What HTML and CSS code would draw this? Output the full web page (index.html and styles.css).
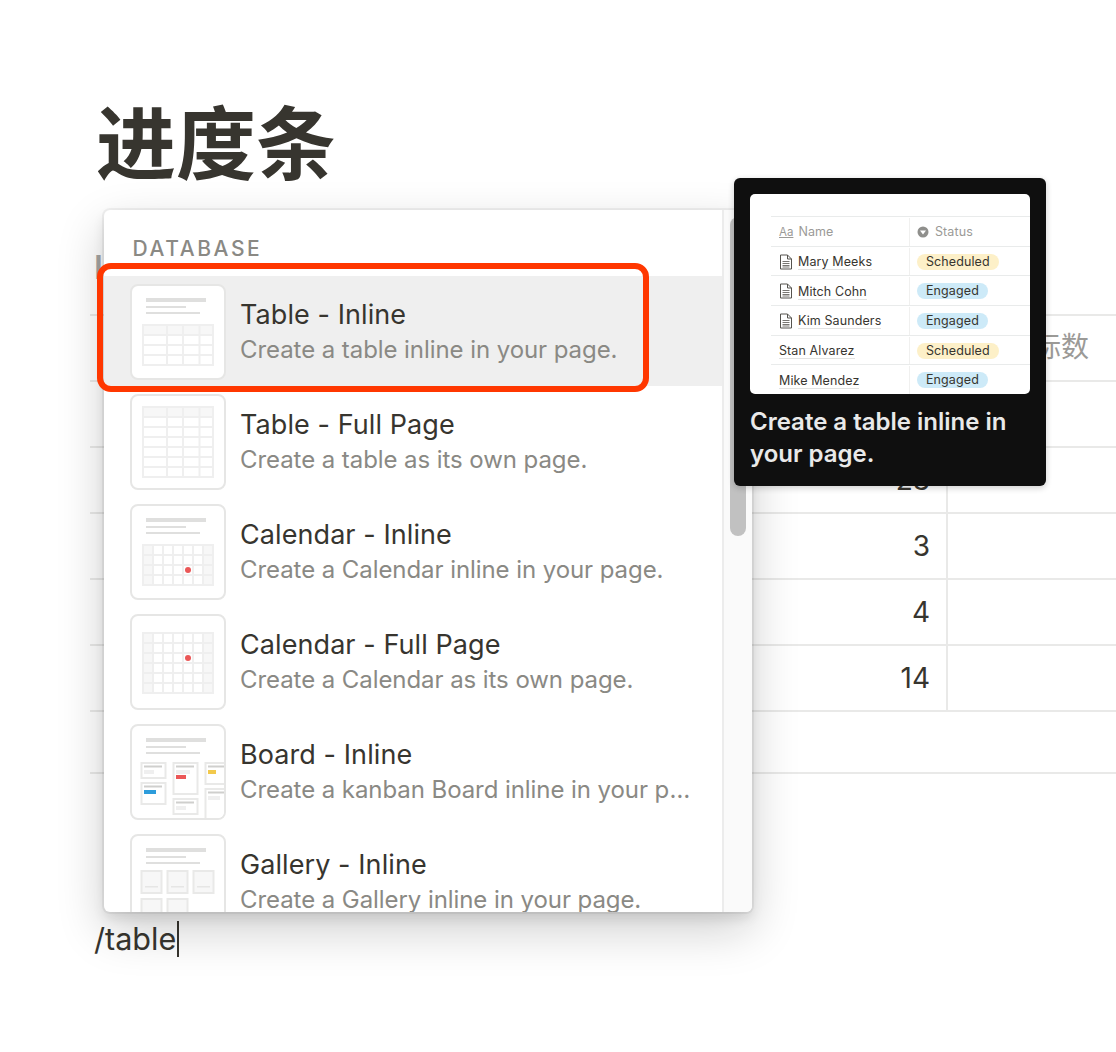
FILE: index.html
```html
<!DOCTYPE html>
<html lang="zh">
<head>
<meta charset="utf-8">
<title>进度条</title>
<link rel="stylesheet" href="styles.css">
</head>
<body>
<main class="page">
  <h1 class="title">进度条</h1>
  <div class="stub">I</div>
  <div class="sheet">
    <div class="sheet-row"><div class="num"></div><div class="head">指标数</div></div>
    <div class="sheet-row"><div class="num"></div><div></div></div>
    <div class="sheet-row"><div class="num">23</div><div></div></div>
    <div class="sheet-row"><div class="num">3</div><div></div></div>
    <div class="sheet-row"><div class="num">4</div><div></div></div>
    <div class="sheet-row"><div class="num">14</div><div></div></div>
    <div class="sheet-row sheet-blank"></div>
  </div>
  <div class="input">/table<span class="caret"></span></div>
</main>

<svg class="defs" width="0" height="0" aria-hidden="true">
  <defs>
    <g id="lines">
      <rect x="14" y="12" width="60" height="4" fill="#dfdfde"/>
      <rect x="14" y="20" width="40" height="2" fill="#dfdfde"/>
      <rect x="14" y="26" width="54" height="2" fill="#dfdfde"/>
    </g>
    <g id="doc" fill="none" stroke="#55534e" stroke-width="1">
      <path d="M1.500 1h7l4 4v10h-11z"/><path d="M8.500 1v4h4"/><path d="M3.500 7.500h7M3.500 9.500h7M3.500 11.500h7M3.500 13h7" stroke-width=".8"/>
    </g>
  </defs>
</svg>

<section class="menu">
  <div class="menu-list">
    <div class="menu-label">DATABASE</div>

    <div class="item item-active">
      <div class="thumb"><svg viewBox="0 0 92 92" class="thumb-svg">
        <use href="#lines"/>
        <g class="grid"><rect x="11" y="39" width="70" height="40"/><rect x="11" y="39" width="70" height="10" class="shade"/>
        <path d="M11 49h70M11 59h70M11 69h70M35 39v40M51 39v40M67.500 39v40"/></g>
      </svg></div>
      <div class="item-text"><div class="item-title">Table - Inline</div><div class="item-desc">Create a table inline in your page.</div></div>
    </div>

    <div class="item">
      <div class="thumb"><svg viewBox="0 0 92 92" class="thumb-svg">
        <g class="grid"><rect x="11" y="11" width="70" height="70"/><rect x="11" y="11" width="70" height="10" class="shade"/>
        <path d="M11 21h70M11 31h70M11 41h70M11 51h70M11 61h70M11 71h70M35 11v70M51 11v70M67.500 11v70"/></g>
      </svg></div>
      <div class="item-text"><div class="item-title">Table - Full Page</div><div class="item-desc">Create a table as its own page.</div></div>
    </div>

    <div class="item">
      <div class="thumb"><svg viewBox="0 0 92 92" class="thumb-svg">
        <use href="#lines"/>
        <g class="grid"><rect x="11" y="39" width="70" height="40"/><rect x="11" y="39" width="10" height="40" class="shade"/><rect x="71" y="39" width="10" height="40" class="shade"/>
        <path d="M11 49h70M11 59h70M11 69h70M21 39v40M31 39v40M41 39v40M51 39v40M61 39v40M71 39v40"/></g>
        <circle cx="56" cy="64" r="3" fill="#eb5757"/>
      </svg></div>
      <div class="item-text"><div class="item-title">Calendar - Inline</div><div class="item-desc">Create a Calendar inline in your page.</div></div>
    </div>

    <div class="item">
      <div class="thumb"><svg viewBox="0 0 92 92" class="thumb-svg">
        <g class="grid"><rect x="11" y="17" width="70" height="60"/><rect x="11" y="17" width="10" height="60" class="shade"/><rect x="71" y="17" width="10" height="60" class="shade"/>
        <path d="M11 27h70M11 37h70M11 47h70M11 57h70M11 67h70M21 17v60M31 17v60M41 17v60M51 17v60M61 17v60M71 17v60"/></g>
        <circle cx="56" cy="42" r="3" fill="#eb5757"/>
      </svg></div>
      <div class="item-text"><div class="item-title">Calendar - Full Page</div><div class="item-desc">Create a Calendar as its own page.</div></div>
    </div>

    <div class="item">
      <div class="thumb"><svg viewBox="0 0 92 92" class="thumb-svg">
        <use href="#lines"/>
        <g class="card">
          <rect x="9.500" y="37" width="24" height="15"/><rect x="9.500" y="57" width="24" height="21"/>
          <rect x="41.500" y="37" width="24" height="31"/><rect x="41.500" y="73" width="24" height="15"/>
          <rect x="73.500" y="37" width="24" height="21"/><rect x="73.500" y="63" width="24" height="32"/>
        </g>
        <g fill="#cfcfcd">
          <rect x="12" y="39.500" width="18" height="2"/><rect x="44" y="39.500" width="18" height="2"/><rect x="76" y="39.500" width="16" height="2"/>
          <rect x="12" y="59.500" width="18" height="2"/><rect x="44" y="75.500" width="18" height="2"/><rect x="76" y="65.500" width="16" height="2"/>
        </g>
        <g fill="#efefef">
          <rect x="12" y="44" width="10" height="4"/><rect x="44" y="44" width="14" height="4"/><rect x="44" y="80" width="10" height="4"/><rect x="76" y="70" width="12" height="4"/>
        </g>
        <rect x="44" y="49" width="10" height="4" fill="#eb5757"/>
        <rect x="76" y="44" width="8" height="4" fill="#f2c94c"/>
        <rect x="12" y="64" width="12" height="4" fill="#2d9cdb"/>
      </svg></div>
      <div class="item-text"><div class="item-title">Board - Inline</div><div class="item-desc item-clip">Create a kanban Board inline in your page.</div></div>
    </div>

    <div class="item">
      <div class="thumb"><svg viewBox="0 0 92 92" class="thumb-svg">
        <use href="#lines"/>
        <g class="tile">
          <rect x="9.500" y="35" width="20" height="22"/><rect x="35.500" y="35" width="20" height="22"/><rect x="61.500" y="35" width="20" height="22"/>
          <rect x="9.500" y="63" width="20" height="22"/><rect x="35.500" y="63" width="20" height="22"/>
        </g>
        <g fill="#e6e6e5">
          <rect x="13" y="50" width="13" height="1.500"/><rect x="39" y="50" width="13" height="1.500"/><rect x="65" y="50" width="13" height="1.500"/>
        </g>
      </svg></div>
      <div class="item-text"><div class="item-title">Gallery - Inline</div><div class="item-desc">Create a Gallery inline in your page.</div></div>
    </div>
  </div>
  <div class="track"><div class="thumbbar"></div></div>
</section>

<div class="callout"></div>

<aside class="tip">
  <div class="preview">
    <div class="pv-row pv-head">
      <div class="pv-name"><span class="aa">Aa</span>Name</div>
      <div class="pv-status"><svg class="pv-dot" viewBox="0 0 12 12"><circle cx="6" cy="6" r="5.500" fill="#8f8f8c"/><path d="M3 4.500h6L6 8.500z" fill="#fff"/></svg>Status</div>
    </div>
    <div class="pv-row">
      <div class="pv-name"><svg class="doc" viewBox="0 0 14 16"><use href="#doc"/></svg><span class="u">Mary Meeks</span></div>
      <div class="pv-status"><span class="pill pill-y">Scheduled</span></div>
    </div>
    <div class="pv-row">
      <div class="pv-name"><svg class="doc" viewBox="0 0 14 16"><use href="#doc"/></svg><span class="u">Mitch Cohn</span></div>
      <div class="pv-status"><span class="pill pill-b">Engaged</span></div>
    </div>
    <div class="pv-row">
      <div class="pv-name"><svg class="doc" viewBox="0 0 14 16"><use href="#doc"/></svg><span class="u">Kim Saunders</span></div>
      <div class="pv-status"><span class="pill pill-b">Engaged</span></div>
    </div>
    <div class="pv-row">
      <div class="pv-name"><span class="u">Stan Alvarez</span></div>
      <div class="pv-status"><span class="pill pill-y">Scheduled</span></div>
    </div>
    <div class="pv-row">
      <div class="pv-name"><span class="u">Mike Mendez</span></div>
      <div class="pv-status"><span class="pill pill-b">Engaged</span></div>
    </div>
  </div>
  <p class="tip-text">Create a table inline in your page.</p>
</aside>
</body>
</html>
```
FILE: styles.css
```css
* { box-sizing: border-box; }
html, body { margin: 0; padding: 0; background: #fff; }
body {
  position: relative;
  width: 1116px;
  height: 1052px;
  overflow: hidden;
  font-family: Inter, "Noto Sans CJK SC", sans-serif;
  color: #37352f;
}
.defs { position: absolute; }

.page { padding: 91px 0 0 90px; }
.title {
  margin: 0 0 0 6px;
  height: 159px;
  font: 700 80px/94px "Noto Sans CJK SC", sans-serif;
  color: #37352f;
}
.stub {
  height: 64px;
  margin-left: 4px;
  font-size: 32px;
  font-weight: 600;
  line-height: 36px;
  color: #a5a5a3;
}
.sheet { border-top: 2px solid #e9e9e8; }
.sheet-row {
  display: grid;
  grid-template-columns: 858px 1fr;
  height: 66px;
  border-bottom: 2px solid #e9e9e8;
}
.sheet-blank { height: 62px; }
.num {
  border-right: 2px solid #e9e9e8;
  padding: 15px 16px 0 0;
  text-align: right;
  font-size: 28px;
  line-height: 34px;
}
.head {
  padding: 13px 27px 0 0;
  text-align: right;
  font-size: 28px;
  line-height: 36px;
  color: #9b9a97;
}
.input {
  margin: 147px 0 0 4px;
  display: flex;
  align-items: center;
  height: 36px;
  font-size: 30.600px;
  line-height: 36px;
  color: #37352f;
}
.caret { width: 2px; height: 36px; margin-left: 1px; background: #37352f; }

.menu {
  position: absolute;
  left: 104px;
  top: 210px;
  width: 648px;
  height: 702px;
  display: flex;
  background: #fff;
  border-radius: 6px;
  overflow: hidden;
  box-shadow: 0 0 0 2px rgba(15,15,15,.05), 0 6px 12px rgba(15,15,15,.1), 0 18px 48px rgba(15,15,15,.2);
}
.menu-list { width: 618px; flex: none; overflow: hidden; }
.menu-label {
  height: 66px;
  padding: 27px 0 0 28.500px;
  font-size: 21px;
  line-height: 24px;
  font-weight: 500;
  letter-spacing: 2.600px;
  color: #8a8984;
}
.item {
  display: flex;
  align-items: flex-start;
  height: 110px;
  padding: 8px 0 0 26px;
}
.item-active { background: #efefef; }
.thumb {
  width: 96px;
  height: 96px;
  flex: none;
  background: #fff;
  border: 2px solid #e6e6e5;
  border-radius: 8px;
  overflow: hidden;
}
.thumb-svg { display: block; width: 92px; height: 92px; }
.grid rect { fill: #fff; stroke: #efefef; stroke-width: 2; }
.grid rect.shade { fill: #f7f7f7; }
.grid path { fill: none; stroke: #efefef; stroke-width: 2; }
.card rect { fill: #fff; stroke: #e9e9e8; stroke-width: 2; }
.tile rect { fill: #f7f7f7; stroke: #e9e9e8; stroke-width: 2; }
.item-text { margin: 13px 0 0 14px; min-width: 0; width: 458px; }
.item-title {
  font-size: 27px;
  line-height: 36px;
  letter-spacing: .08px;
  color: #37352f;
  white-space: nowrap;
}
.item-desc {
  font-size: 24px;
  line-height: 34px;
  letter-spacing: -.07px;
  color: #8a8984;
  white-space: nowrap;
}
.item-clip { overflow: hidden; text-overflow: ellipsis; }

.track {
  width: 30px;
  flex: none;
  background: #fafafa;
  border-left: 2px solid #ececec;
  padding: 7px 0 0 6px;
}
.thumbbar { width: 16px; height: 319px; border-radius: 8px; background: #c1c1c1; }

.callout {
  position: absolute;
  left: 97px;
  top: 263px;
  width: 552px;
  height: 129px;
  border: 6px solid #ff3700;
  border-radius: 14px;
}

.tip {
  position: absolute;
  left: 734px;
  top: 178px;
  width: 312px;
  height: 308px;
  padding: 16px;
  background: #0f0f0f;
  border-radius: 6px;
  box-shadow: 0 2px 6px rgba(15,15,15,.2);
}
.preview {
  height: 200px;
  padding: 22px 0 0 21px;
  background: #fff;
  border-radius: 5px;
  overflow: hidden;
}
.pv-row {
  display: grid;
  grid-template-columns: 139px 1fr;
  height: 29.700px;
  padding-top: 1px;
  border-top: 1px solid #e9ebeb;
  font-size: 12.500px;
  letter-spacing: .1px;
  color: #37352f;
}
.pv-name, .pv-status { display: flex; align-items: center; }
.pv-name { padding-left: 8px; border-right: 1px solid #f0f0ef; }
.pv-status { padding-left: 7px; }
.pv-head { color: #9b9a97; }
.aa { font-size: 11.500px; margin-right: 5px; text-decoration: underline; letter-spacing: 0; }
.pv-dot { width: 12px; height: 12px; margin-right: 6px; }
.doc { width: 14px; height: 16px; margin-right: 5px; }
.u { padding-top: 2px; border-bottom: 1px solid #e3e3e2; line-height: 14px; }
.pill { height: 16px; line-height: 16px; padding: 0 9px; border-radius: 8px; }
.pill-y { background: #fdf0c8; }
.pill-b { background: #cdeaf8; }
.tip-text {
  margin: 12px 0 0;
  font-size: 24px;
  font-weight: 600;
  line-height: 32px;
  color: #e9e9e9;
}
```
